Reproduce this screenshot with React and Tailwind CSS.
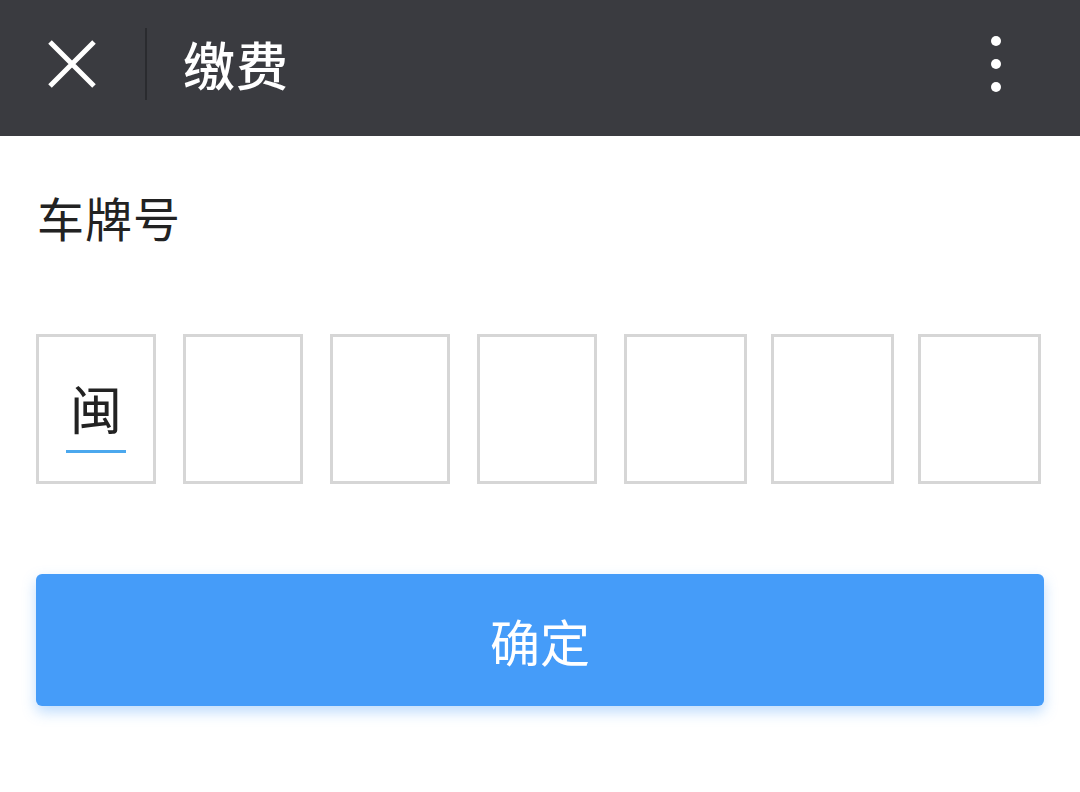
const boxes = [
    { w: 'w-[120px]', ml: 'ml-0', ch: '闽', active: true },
    { w: 'w-[120px]', ml: 'ml-[27px]' },
    { w: 'w-[120px]', ml: 'ml-[27px]' },
    { w: 'w-[120px]', ml: 'ml-[27px]' },
    { w: 'w-[123px]', ml: 'ml-[27px]' },
    { w: 'w-[123px]', ml: 'ml-[24px]' },
    { w: 'w-[123px]', ml: 'ml-[24px]' },
]

function App() {
    return (
        <div
            className="w-[1080px] h-[792px] bg-white overflow-hidden"
            style={{ fontFamily: '"Noto Sans CJK SC", "Noto Sans", sans-serif' }}
        >
            {/* Top bar */}
            <div className="h-[136px] bg-[#3a3b40] flex items-center">
                <div className="w-[145px] flex justify-center pr-[1px] pb-[8px]">
                    <svg width="48" height="48" viewBox="0 0 48 48">
                        <path d="M2 2 L46 46 M46 2 L2 46" stroke="#ffffff" strokeWidth="5" />
                    </svg>
                </div>
                <div className="w-[2px] h-[72px] bg-[#2a2b2f] -mt-[8px]"></div>
                <h1 className="ml-[36px] text-white text-[52px] font-medium leading-none -mt-[8px] tracking-[1px]">缴费</h1>
                <div className="ml-auto mr-[79px] flex flex-col gap-[13px] -mt-[8px]">
                    <span className="w-[10px] h-[10px] rounded-full bg-white"></span>
                    <span className="w-[10px] h-[10px] rounded-full bg-white"></span>
                    <span className="w-[10px] h-[10px] rounded-full bg-white"></span>
                </div>
            </div>

            <div className="px-[36px]">
                <div className="mt-[48px] ml-[1px] text-[47px] leading-[66px] text-[#222222] tracking-[1px]">车牌号</div>

                {/* Plate inputs */}
                <div className="flex mt-[84px]">
                    {boxes.map((b, i) => (
                        <div
                            key={i}
                            className={`${b.w} ${b.ml} h-[150px] border-[3px] border-[#d6d6d6] flex flex-col items-center justify-center`}
                        >
                            {b.active && (
                                <>
                                    <span className="text-[52px] leading-none text-[#222222] mt-[16px]">{b.ch}</span>
                                    <span className="block w-[60px] h-[3px] bg-[#4ba8ee] mt-[16px]"></span>
                                </>
                            )}
                        </div>
                    ))}
                </div>

                {/* Confirm */}
                <button className="mt-[90px] w-[1008px] h-[132px] rounded-[6px] bg-[#459cf9] text-white text-[50px] leading-none shadow-[0_6px_14px_rgba(69,156,249,0.35)] flex items-center justify-center">
                    确定
                </button>
            </div>
        </div>
    )
}

export default App
